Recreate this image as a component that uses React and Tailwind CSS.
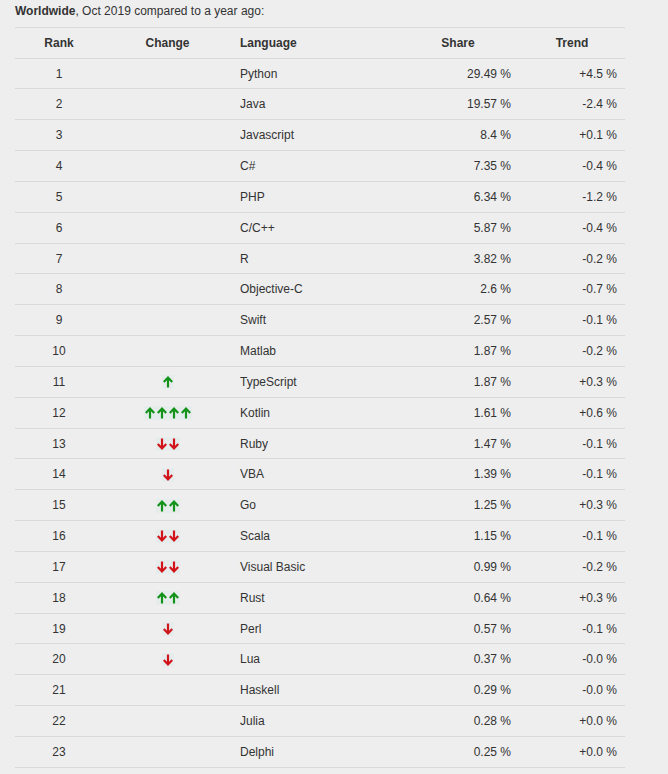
import React from "react";

const rows = [
  [1, null, "Python", "29.49 %", "+4.5 %"],
  [2, null, "Java", "19.57 %", "-2.4 %"],
  [3, null, "Javascript", "8.4 %", "+0.1 %"],
  [4, null, "C#", "7.35 %", "-0.4 %"],
  [5, null, "PHP", "6.34 %", "-1.2 %"],
  [6, null, "C/C++", "5.87 %", "-0.4 %"],
  [7, null, "R", "3.82 %", "-0.2 %"],
  [8, null, "Objective-C", "2.6 %", "-0.7 %"],
  [9, null, "Swift", "2.57 %", "-0.1 %"],
  [10, null, "Matlab", "1.87 %", "-0.2 %"],
  [11, "u1", "TypeScript", "1.87 %", "+0.3 %"],
  [12, "u4", "Kotlin", "1.61 %", "+0.6 %"],
  [13, "d2", "Ruby", "1.47 %", "-0.1 %"],
  [14, "d1", "VBA", "1.39 %", "-0.1 %"],
  [15, "u2", "Go", "1.25 %", "+0.3 %"],
  [16, "d2", "Scala", "1.15 %", "-0.1 %"],
  [17, "d2", "Visual Basic", "0.99 %", "-0.2 %"],
  [18, "u2", "Rust", "0.64 %", "+0.3 %"],
  [19, "d1", "Perl", "0.57 %", "-0.1 %"],
  [20, "d1", "Lua", "0.37 %", "-0.0 %"],
  [21, null, "Haskell", "0.29 %", "-0.0 %"],
  [22, null, "Julia", "0.28 %", "+0.0 %"],
  [23, null, "Delphi", "0.25 %", "+0.0 %"],
];

function Arrow({ up }) {
  const color = up ? "#14921a" : "#d1141a";
  return (
    <span className="inline-block w-[12px] h-[14px] bg-[#e6ecec] align-middle">
      <svg width="12" height="14" viewBox="0 0 12 14">
        {up ? (
          <path d="M6 12.5V3 M1.8 7 L6 2.6 L10.2 7" stroke={color} strokeWidth="2.2" fill="none" strokeLinejoin="miter" />
        ) : (
          <path d="M6 1.5V11 M1.8 7 L6 11.4 L10.2 7" stroke={color} strokeWidth="2.2" fill="none" strokeLinejoin="miter" />
        )}
      </svg>
    </span>
  );
}

function Change({ c }) {
  if (!c) return null;
  const up = c[0] === "u";
  const n = parseInt(c.slice(1), 10);
  return (
    <span className="inline-flex align-middle">
      {Array.from({ length: n }).map((_, i) => (
        <Arrow key={i} up={up} />
      ))}
    </span>
  );
}

export default function App() {
  return (
    <div
      className="min-h-[774px] bg-[#eeeeee] text-[#333333] text-[12px] leading-[13.83px] px-[15px] pt-[5px]"
      style={{ fontFamily: '"Liberation Sans", Arial, sans-serif' }}
    >
      <div className="mb-[8px]">
        <b>Worldwide</b>, Oct 2019 compared to a year ago:
      </div>
      <table className="table-fixed border-collapse w-[610px]">
        <colgroup>
          <col className="w-[88px]" />
          <col className="w-[129px]" />
          <col className="w-[165px]" />
          <col className="w-[122px]" />
          <col className="w-[106px]" />
        </colgroup>
        <thead>
          <tr className="border-t border-[#d9d9d9]">
            <th className="px-[8px] pt-[9px] pb-[7px] text-center font-bold">Rank</th>
            <th className="px-[8px] pt-[9px] pb-[7px] text-center font-bold">Change</th>
            <th className="px-[8px] pt-[9px] pb-[7px] text-left font-bold">Language</th>
            <th className="px-[8px] pt-[9px] pb-[7px] text-center font-bold">Share</th>
            <th className="px-[8px] pt-[9px] pb-[7px] text-center font-bold">Trend</th>
          </tr>
        </thead>
        <tbody>
          {rows.map((r) => (
            <tr key={r[0]} className="border-t border-b border-[#d9d9d9]">
              <td className="px-[8px] pt-[9px] pb-[7px] text-center">{r[0]}</td>
              <td className="px-[8px] pt-[1px] pb-0 text-center leading-[0]">
                <Change c={r[1]} />
              </td>
              <td className="px-[8px] pt-[9px] pb-[7px] text-left">{r[2]}</td>
              <td className="px-[8px] pt-[9px] pb-[7px] text-right">{r[3]}</td>
              <td className="px-[8px] pt-[9px] pb-[7px] text-right">{r[4]}</td>
            </tr>
          ))}
        </tbody>
      </table>
    </div>
  );
}
